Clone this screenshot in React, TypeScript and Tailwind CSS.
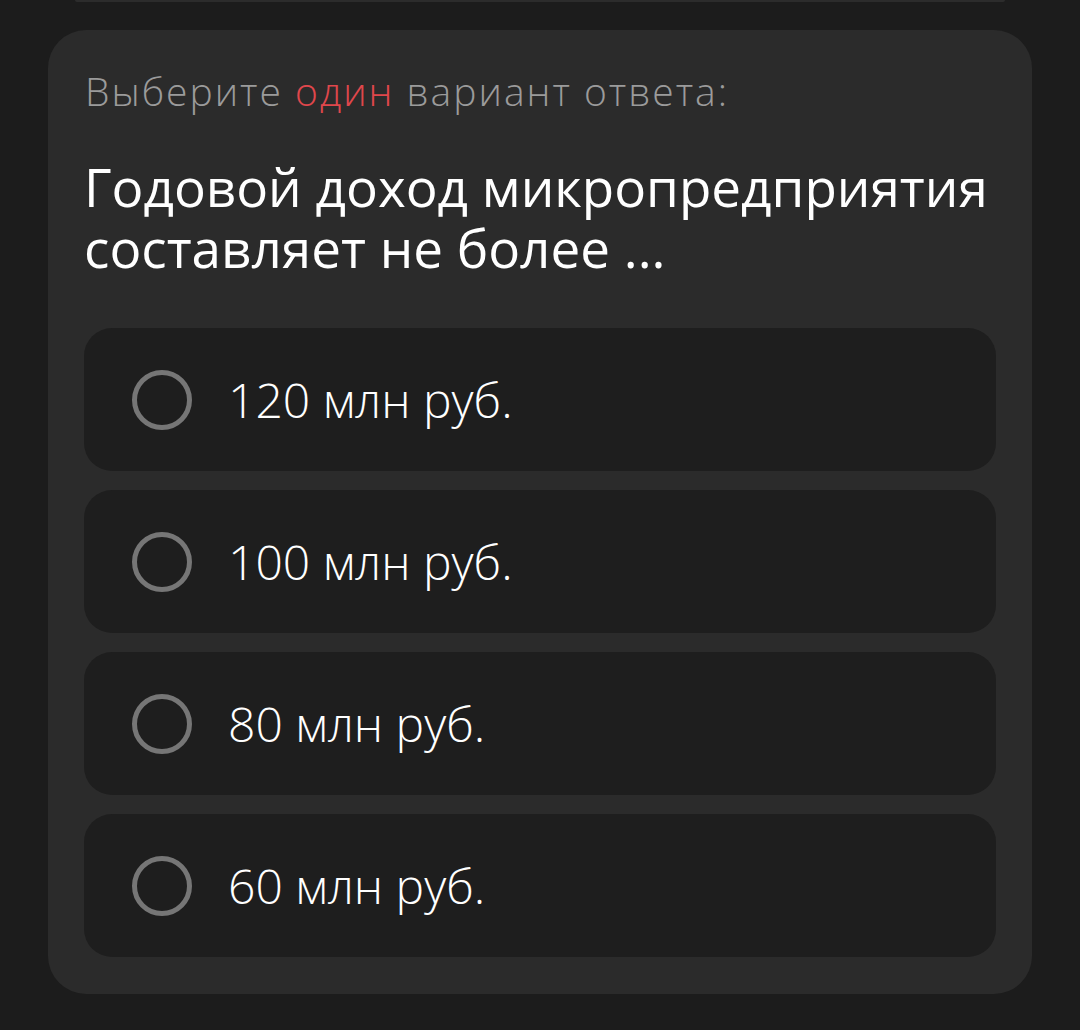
import React from 'react';

const OPTIONS = ['120 млн руб.', '100 млн руб.', '80 млн руб.', '60 млн руб.'];

const Radio: React.FC = () => (
  <span className="block w-[60px] h-[60px] rounded-full border-[5px] border-[#767676] shrink-0" />
);

const App: React.FC = () => {
  return (
    <div
      className="w-[1080px] h-[1030px] bg-[#1c1c1c] overflow-hidden"
      style={{ fontFamily: '"Open Sans", Lato, sans-serif' }}
    >
      <div className="mx-[75px] h-[2px] bg-[#2c2c2c] rounded-b" />
      <div className="mx-[48px] mt-[28px] bg-[#2b2b2b] rounded-[38px] px-[36px] pt-[37px] pb-[37px]">
        <p className="text-[39px] leading-[48px] tracking-[2px] font-light text-[#9b9b9b] ml-[1px]">
          Выберите <span className="text-[#e0474c]">один</span> вариант ответа:
        </p>
        <h1 className="mt-[41px] text-[53px] leading-[61px] font-normal text-white">
          Годовой доход микропредприятия составляет не более ...
        </h1>
        <div className="mt-[50px] flex flex-col gap-[19px]">
          {OPTIONS.map((o) => (
            <div
              key={o}
              className="h-[143px] bg-[#1e1e1e] rounded-[28px] flex items-center pl-[48px] gap-[36px]"
            >
              <Radio />
              <span className="text-[48px] font-light text-white">{o}</span>
            </div>
          ))}
        </div>
      </div>
    </div>
  );
};

export default App;
